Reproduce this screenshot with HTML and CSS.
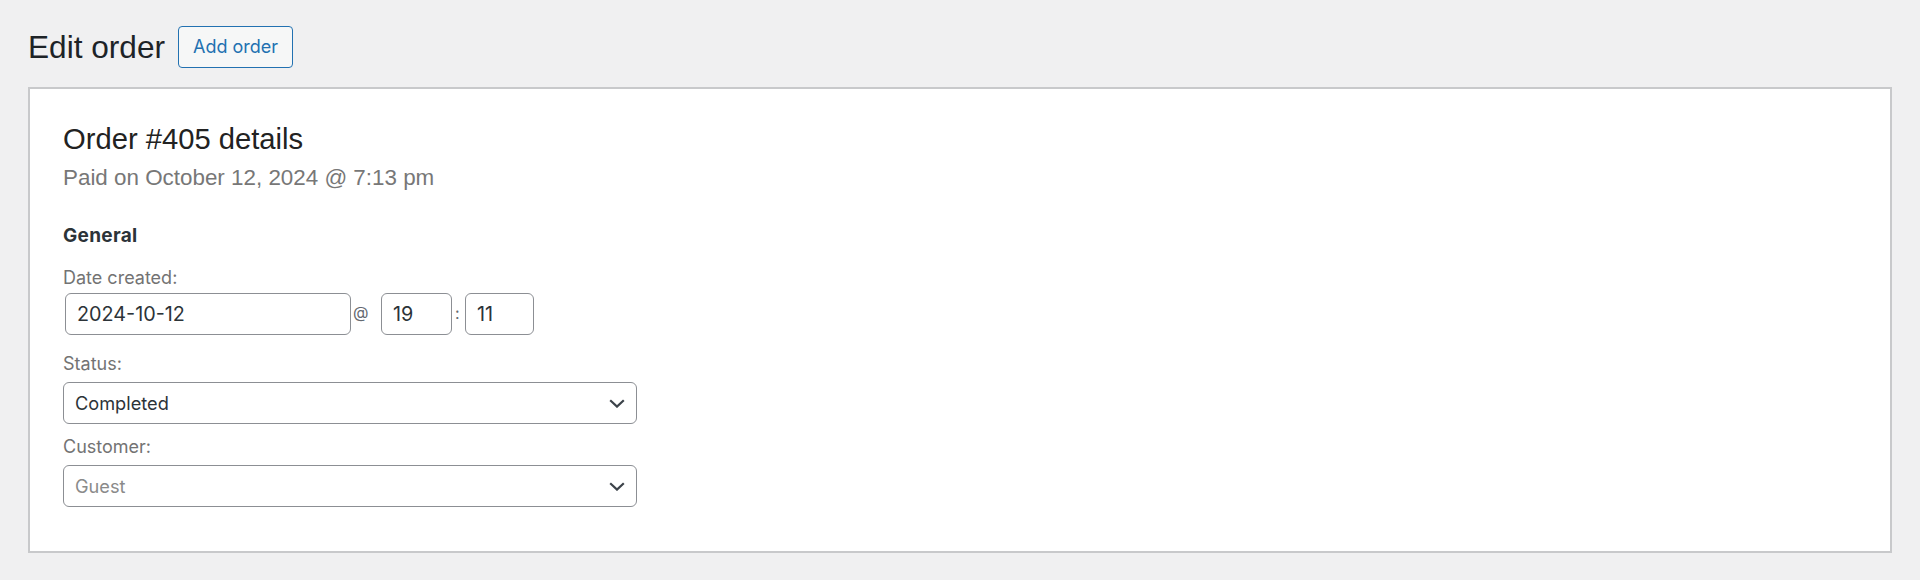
FILE: index.html
```html
<!DOCTYPE html>
<html lang="en">
<head>
<meta charset="utf-8">
<title>Edit order</title>
<link rel="stylesheet" href="styles.css">
</head>
<body>
<div class="wrap">
  <div class="page-head">
    <h1 class="page-title">Edit order</h1>
    <a class="btn-outline" href="#">Add order</a>
  </div>
  <div class="panel">
    <h2 class="order-title">Order #405 details</h2>
    <p class="order-meta">Paid on October 12, 2024 @ 7:13 pm</p>
    <h3 class="section-title">General</h3>

    <label class="field-label label-date">Date created:</label>
    <div class="date-row">
      <input class="text-input date-input" type="text" value="2024-10-12">
      <span class="sep sep-at">@</span>
      <input class="text-input time-input hour" type="text" value="19">
      <span class="sep sep-colon">:</span>
      <input class="text-input time-input minute" type="text" value="11">
    </div>

    <label class="field-label label-status">Status:</label>
    <div class="select">
      <span class="select-value">Completed</span>
      <svg class="chevron" width="16" height="9" viewBox="0 0 16 9" aria-hidden="true"><polyline points="1.2,1.2 8,7.6 14.8,1.2" fill="none" stroke="#3c434a" stroke-width="2.2"/></svg>
    </div>

    <label class="field-label label-customer">Customer:</label>
    <div class="select">
      <span class="select-value placeholder">Guest</span>
      <svg class="chevron" width="16" height="9" viewBox="0 0 16 9" aria-hidden="true"><polyline points="1.2,1.2 8,7.6 14.8,1.2" fill="none" stroke="#3c434a" stroke-width="2.2"/></svg>
    </div>
  </div>
</div>
</body>
</html>
```
FILE: styles.css
```css
* { box-sizing: border-box; }

body {
  margin: 0;
  background: #f0f0f1;
  font-family: Inter, "Liberation Sans", sans-serif;
  color: #2c3338;
}

.wrap {
  padding: 26px 28px 0;
}

.page-head {
  display: flex;
  align-items: center;
  height: 42px;
  gap: 13px;
}

.page-title {
  margin: 0;
  font-family: "Liberation Sans", Arial, sans-serif;
  font-weight: 400;
  font-size: 31.6px;
  line-height: 42px;
  color: #1d2327;
}

.btn-outline {
  display: flex;
  align-items: center;
  height: 42px;
  padding: 0 14px;
  border: 1px solid #2271b1;
  border-radius: 4px;
  background: #f6f7f7;
  color: #2271b1;
  font-family: Inter, sans-serif;
  font-size: 18px;
  line-height: 40px;
  text-decoration: none;
}

.panel {
  margin-top: 19px;
  background: #fff;
  border: 2px solid #c8c9cb;
  padding: 32px 33px 44px;
  display: flex;
  flex-direction: column;
  align-items: flex-start;
}

.order-title {
  margin: 0;
  font-family: "Liberation Sans", Arial, sans-serif;
  font-weight: 400;
  font-size: 29.2px;
  line-height: 36px;
  color: #222;
}

.order-meta {
  margin: 6px 0 0;
  font-family: "Liberation Sans", Arial, sans-serif;
  font-size: 22.4px;
  line-height: 30px;
  color: #777;
}

.section-title {
  margin: 31px 0 0;
  font-family: Inter, sans-serif;
  font-weight: 700;
  font-size: 19px;
  letter-spacing: 0.3px;
  line-height: 24px;
  color: #2c3338;
}

.field-label {
  display: block;
  font-size: 18px;
  line-height: 24px;
  color: #737373;
}

.label-date { margin-top: 18px; }
.label-status { margin-top: 17px; }
.label-customer { margin-top: 11px; }

.date-row {
  margin-top: 3px;
  display: flex;
  align-items: center;
}

.text-input {
  height: 42px;
  border: 1px solid #8c8f94;
  border-radius: 6px;
  padding: 0 11px;
  font-family: Inter, sans-serif;
  font-size: 19.8px;
  color: #2c3338;
  background: #fff;
  outline: none;
}

.date-input {
  width: 286px;
  margin-left: 2px;
}

.hour { width: 71px; }
.minute { width: 69px; }

.sep {
  color: #646970;
  line-height: 1;
}

.sep-at {
  width: 30px;
  padding-left: 2px;
  font-size: 16px;
  margin-bottom: 5px;
}

.sep-colon {
  width: 13px;
  padding-left: 3px;
  font-size: 16px;
  margin-bottom: 2px;
}

.select {
  margin-top: 6px;
  width: 574px;
  height: 42px;
  display: flex;
  align-items: center;
  justify-content: space-between;
  border: 1px solid #8c8f94;
  border-radius: 6px;
  padding: 0 11px 0 11px;
  background: #fff;
  font-size: 18.2px;
  color: #2c3338;
}

.placeholder {
  color: #8a8a8a;
}

.chevron {
  display: block;
  flex: none;
}
```
